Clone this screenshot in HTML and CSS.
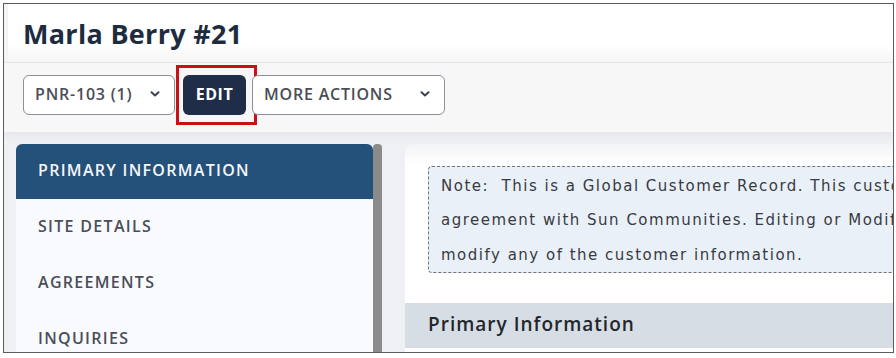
FILE: index.html
```html
<!DOCTYPE html>
<html lang="en">
<head>
    <meta charset="UTF-8">
    <meta name="viewport" content="width=device-width, initial-scale=1.0">
    <title>Marla Berry #21</title>
    <link rel="stylesheet" href="styles.css">
</head>
<body>
    <div class="frame">
        <header class="header">
            <h1>Marla Berry #21</h1>
        </header>

        <div class="toolbar">
            <button class="btn btn-outline btn-select">
                PNR-103 (1)
                <svg class="chevron" viewBox="0 0 10 6" width="10" height="6"><path d="M1.5 1.2 5 4.5 8.5 1.2" fill="none" stroke="currentColor" stroke-width="2" stroke-linecap="round" stroke-linejoin="round"/></svg>
            </button>
            <span class="highlight">
                <button class="btn btn-primary">EDIT</button>
            </span>
            <button class="btn btn-outline btn-more">
                MORE ACTIONS
                <svg class="chevron" viewBox="0 0 10 6" width="10" height="6"><path d="M1.5 1.2 5 4.5 8.5 1.2" fill="none" stroke="currentColor" stroke-width="2" stroke-linecap="round" stroke-linejoin="round"/></svg>
            </button>
        </div>

        <main class="body">
            <div class="sidebar-wrap">
                <nav class="sidebar">
                    <a href="#" class="nav-item active">PRIMARY INFORMATION</a>
                    <a href="#" class="nav-item">SITE DETAILS</a>
                    <a href="#" class="nav-item">AGREEMENTS</a>
                    <a href="#" class="nav-item">INQUIRIES</a>
                </nav>
                <div class="scrollbar"></div>
            </div>

            <section class="panel">
                <div class="note">
                    <p>Note:&nbsp; This is a Global Customer Record. This customer has an active</p>
                    <p>agreement with Sun Communities. Editing or Modifying this record will</p>
                    <p>modify any of the customer information.</p>
                </div>
                <h2 class="section-title">Primary Information</h2>
            </section>
        </main>
    </div>
</body>
</html>
```

FILE: styles.css
```css
* {
    margin: 0;
    padding: 0;
    box-sizing: border-box;
    font-family: "Open Sans", "DejaVu Sans", sans-serif;
}

body {
    background-color: white;
}

.frame {
    margin: 3px 0 0 3px;
    width: 891px;
    height: 350px;
    border: 1px solid #5c5c5c;
    overflow: hidden;
    display: flex;
    flex-direction: column;
    background-color: #eef0f3;
}

.header {
    height: 58px;
    flex-shrink: 0;
    padding: 11px 0 0 15px;
    background: linear-gradient(#ffffff 70%, #f6f6f6);
    border-left: 4px solid #f4f4f5;
}

h1 {
    font-size: 27px;
    font-weight: 700;
    color: #1e2c40;
    letter-spacing: 0.3px;
}

.toolbar {
    height: 70px;
    flex-shrink: 0;
    display: flex;
    align-items: flex-start;
    padding: 12px 0 0 19px;
    background-color: #f7f7f7;
    border-top: 1px solid #e6e6e8;
    box-shadow: 0 4px 6px #e6e7ea;
    position: relative;
}

.btn {
    height: 40px;
    border-radius: 6px;
    font-size: 16px;
    font-weight: 600;
    letter-spacing: 0.8px;
    display: flex;
    align-items: center;
    padding-bottom: 2px;
    cursor: pointer;
}

.btn-outline {
    background-color: white;
    color: #4a4d55;
    border: 1px solid #8c909a;
    padding: 0 14px 2px 11px;
    justify-content: space-between;
}

.btn-select {
    width: 152px;
}

.btn-more {
    width: 193px;
}

.chevron {
    color: #3c4150;
}

.highlight {
    margin: -10px 0 0 1px;
    padding: 7px 8px 7px 4px;
    border: 3px solid #c8101a;
    height: 60px;
}

.btn-primary {
    background-color: #1f2d48;
    color: white;
    border: none;
    width: 63px;
    justify-content: center;
    font-weight: 700;
    letter-spacing: 0.5px;
}

.highlight + .btn {
    margin-left: -5px;
}

.body {
    flex: 1;
    display: flex;
    padding: 12px 0 0 12px;
    gap: 23px;
    min-height: 0;
}

.sidebar-wrap {
    display: flex;
    flex-shrink: 0;
}

.sidebar {
    width: 357px;
    background-color: #f9fafd;
    border-radius: 6px 6px 0 0;
    overflow: hidden;
    display: flex;
    flex-direction: column;
}

.nav-item {
    height: 56px;
    flex-shrink: 0;
    display: flex;
    align-items: center;
    padding: 0 0 3px 22px;
    font-size: 16px;
    font-weight: 600;
    color: #4a4e5a;
    text-decoration: none;
    letter-spacing: 1.3px;
}

.nav-item.active {
    height: 55px;
    background-color: #245179;
    color: #f4f6fa;
}

.scrollbar {
    width: 9px;
    background-color: #8b8b8c;
    border-radius: 4px 4px 0 0;
}

.panel {
    flex: 1;
    background: linear-gradient(#f3f4f6, #ffffff 20px);
    border-radius: 8px 0 0 0;
    padding-top: 22px;
    min-width: 0;
    overflow: hidden;
}

.note {
    margin-left: 23px;
    width: 760px;
    border: 1px dashed #6f7277;
    border-radius: 4px;
    background-color: #eaf0f8;
    padding: 2px 12px 0;
}

.note p {
    font-family: "DejaVu Sans", sans-serif;
    font-size: 15px;
    line-height: 34.3px;
    letter-spacing: 1.5px;
    color: #383b40;
    white-space: nowrap;
}

.section-title {
    margin-top: 30px;
    height: 45px;
    display: flex;
    align-items: center;
    padding: 0 0 2px 23px;
    background-color: #d6dde4;
    font-size: 19px;
    font-weight: 600;
    letter-spacing: 1px;
    color: #23262b;
}
```
